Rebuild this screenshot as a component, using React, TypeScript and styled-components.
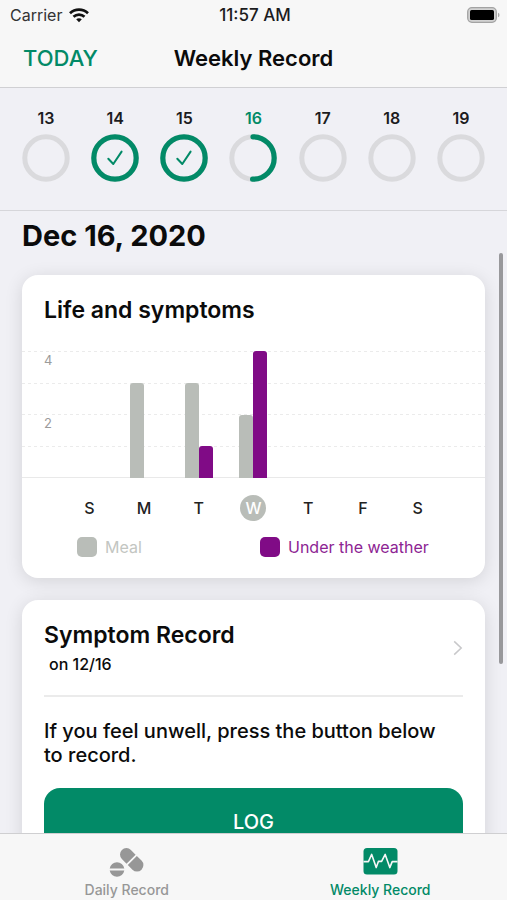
import React from "react";
import styled, { createGlobalStyle } from "styled-components";

const color = {
  green: "#028a67",
  purple: "#800b86",
  stone: "#b9bdb8",
  ring: "#dadadd",
  page: "#f0f0f5",
  bar: "#f7f7f7",
  muted: "#979797",
};

const GlobalStyle = createGlobalStyle`
  *, *::before, *::after { box-sizing: border-box; }
  body { margin: 0; background: ${color.page}; }
  h1, h2, p, ul { margin: 0; padding: 0; }
  ul { list-style: none; }
  button { font: inherit; border: 0; background: none; padding: 0; cursor: pointer; }
  a { color: inherit; text-decoration: none; }
`;

const Screen = styled.div`
  height: 100vh;
  display: flex;
  flex-direction: column;
  background: ${color.page};
  color: #0b0b0b;
  font-family: Inter, "Liberation Sans", sans-serif;
`;

const Header = styled.header`
  flex: none;
  background: ${color.bar};
  border-bottom: 1px solid #d0d0d3;
`;

const StatusBar = styled.div`
  display: grid;
  grid-template-columns: 1fr auto 1fr;
  align-items: center;
  height: 30px;
  padding: 0 7px 0 10px;
  font-size: 16px;
`;

const Carrier = styled.span`
  display: flex;
  align-items: center;
  gap: 7px;
  color: #333;
`;

const Clock = styled.time`
  font-size: 17px;
  font-weight: 500;
  color: #1c1c1e;
`;

const StatusIcons = styled.span`
  display: flex;
  justify-content: flex-end;
`;

const NavBar = styled.div`
  display: grid;
  grid-template-columns: 1fr auto 1fr;
  align-items: center;
  height: 57px;
  padding: 0 23px 2px;
`;

const TodayButton = styled.button`
  justify-self: start;
  color: ${color.green};
  && { font-size: 22px; font-weight: 500; }
`;

const NavTitle = styled.h1`
  font-size: 22px;
  font-weight: 600;
`;

const WeekStrip = styled.ul`
  flex: none;
  display: flex;
  justify-content: space-between;
  height: 123px;
  padding: 20px 22px 0;
  border-bottom: 1px solid #d6d6da;
`;

const DayButton = styled.button<{ $current?: boolean }>`
  display: flex;
  flex-direction: column;
  align-items: center;
  gap: 6px;
  width: 48px;
  color: ${(p) => (p.$current ? color.green : "#1c1c1e")};
  && { font-size: 16px; font-weight: 600; line-height: 20px; }
`;

const Content = styled.div`
  position: relative;
  flex: 1;
  min-height: 0;
`;

const Scroller = styled.main`
  height: 100%;
  overflow-y: auto;
  scrollbar-width: none;
  padding: 6px 22px 24px;
`;

const ScrollThumb = styled.div`
  position: absolute;
  top: 42px;
  right: 4px;
  width: 4px;
  height: 66%;
  border-radius: 2px;
  background: #98989b;
`;

const DateTitle = styled.h2`
  font-size: 29px;
  font-weight: 700;
  line-height: 38px;
  margin-bottom: 20px;
`;

const Card = styled.section`
  background: #fff;
  border-radius: 16px;
  box-shadow: 0 3px 18px rgba(0, 0, 0, 0.12);
  margin-bottom: 22px;
`;

const CardTitle = styled.h2`
  font-size: 23px;
  font-weight: 600;
  line-height: 28px;
`;

const ChartCard = styled(Card)`
  padding-bottom: 21px;
  & > ${CardTitle} { padding: 21px 22px 0; }
`;

const Plot = styled.div`
  display: grid;
  height: 127px;
  margin-top: 27px;
  & > * { grid-area: 1 / 1; }
`;

const GridLines = styled.div`
  display: grid;
  grid-template-rows: repeat(4, 1fr);
  border-bottom: 1px solid #e9e9e9;
`;

const GridRow = styled.span`
  padding: 2px 22px;
  font-size: 13px;
  line-height: 14px;
  color: #9b9b9b;
  background: repeating-linear-gradient(90deg, #ebebeb 0 3px, transparent 3px 6px) top / 100% 1px no-repeat;
`;

const Columns = styled.div`
  display: grid;
  grid-template-columns: repeat(7, 1fr);
  padding: 0 40px;
`;

const Column = styled.div`
  display: grid;
  grid-template-columns: 14px 14px;
  justify-content: center;
  align-items: end;
`;

const Bar = styled.div<{ $tone: string }>`
  background: ${(p) => p.$tone};
  border-radius: 3px 3px 0 0;
`;

const AxisLabels = styled(Columns)`
  margin-top: 17px;
  justify-items: center;
`;

const AxisLabel = styled.span<{ $active?: boolean }>`
  width: 26px;
  height: 26px;
  border-radius: 50%;
  text-align: center;
  font-size: 16px;
  line-height: 26px;
  font-weight: 500;
  color: ${(p) => (p.$active ? "#fff" : "#222")};
  background: ${(p) => (p.$active ? color.stone : "transparent")};
`;

const Legend = styled.ul`
  display: grid;
  grid-template-columns: 1fr 1fr;
  padding: 0 42px 0 55px;
  margin-top: 16px;
`;

const LegendItem = styled.li<{ $tone: string; $text: string }>`
  display: flex;
  align-items: center;
  gap: 8px;
  font-size: 16px;
  line-height: 20px;
  white-space: nowrap;
  color: ${(p) => p.$text};
  &::before {
    content: "";
    width: 20px;
    height: 20px;
    border-radius: 5px;
    background: ${(p) => p.$tone};
  }
`;

const RecordCard = styled(Card)`
  padding: 21px 22px 24px;
`;

const RecordLink = styled.a`
  display: flex;
  align-items: center;
  justify-content: space-between;
  padding-bottom: 21px;
  border-bottom: 2px solid #ebebeb;
`;

const RecordDate = styled.p`
  padding: 5px 0 0 5px;
  font-size: 16px;
  line-height: 20px;
  font-weight: 500;
`;

const Hint = styled.p`
  margin: 22px 0 21px;
  padding-right: 22px;
  font-size: 20px;
  line-height: 24px;
  font-weight: 500;
`;

const LogButton = styled.button`
  width: 100%;
  height: 68px;
  border-radius: 16px;
  color: #fff;
  && { background: ${color.green}; font-size: 20px; font-weight: 500; line-height: 20px; }
`;

const TabBar = styled.nav`
  flex: none;
  display: grid;
  grid-template-columns: 1fr 1fr;
  height: 67px;
  background: ${color.bar};
  border-top: 1px solid #cfcfd1;
`;

const Tab = styled.a<{ $active?: boolean }>`
  display: flex;
  flex-direction: column;
  align-items: center;
  gap: 4px;
  padding-top: 13px;
  font-size: 14px;
  line-height: 18px;
  font-weight: 500;
  color: ${(p) => (p.$active ? color.green : color.muted)};
`;

const WifiIcon = () => (
  <svg width="20" height="15" viewBox="0 0 20 15" fill="none" stroke="#111" strokeWidth="2.7" aria-hidden="true">
    <path d="M1 5.2C6 .4 14 .4 19 5.2" />
    <path d="M4.5 8.8C7.6 5.9 12.4 5.9 15.5 8.8" />
    <path d="M7.2 11.3C8.8 9.9 11.2 9.9 12.8 11.3L10 14.2Z" fill="#111" stroke="none" />
  </svg>
);

const BatteryIcon = () => (
  <svg width="33" height="16" viewBox="0 0 33 16" aria-hidden="true">
    <rect x=".7" y=".7" width="28.6" height="14.6" rx="4.2" fill="#d2d2d2" stroke="#a3a3a3" strokeWidth="1.3" />
    <rect x="3" y="3" width="24" height="10" rx="1.6" fill="#000" />
    <path d="M31 5.7q1.5.6 1.5 2.3T31 10.3z" fill="#aaa" />
  </svg>
);

const Ring = ({ progress }: { progress: number }) => {
  const length = 2 * Math.PI * 21.2;
  return (
    <svg width="48" height="48" viewBox="0 0 48 48" fill="none" aria-hidden="true">
      <circle cx="24" cy="24" r="21.2" stroke={color.ring} strokeWidth="5" />
      {progress > 0 && (
        <circle
          cx="24"
          cy="24"
          r="21.2"
          stroke={color.green}
          strokeWidth="5.2"
          strokeLinecap="round"
          strokeDasharray={progress < 1 ? `${length * progress} ${length}` : undefined}
          transform="rotate(-90 24 24)"
        />
      )}
      {progress === 1 && (
        <path d="M17.3 24.8 22.3 30 30.6 17.6" stroke={color.green} strokeWidth="2" strokeLinecap="round" strokeLinejoin="round" />
      )}
    </svg>
  );
};

const ChevronIcon = () => (
  <svg width="10" height="16" viewBox="0 0 10 16" fill="none" stroke="#c8c8ca" strokeWidth="1.5" aria-hidden="true">
    <path d="M1.2 1.4 8.2 8 1.2 14.6" />
  </svg>
);

const PillsIcon = () => (
  <svg width="35" height="30" viewBox="0 0 35 30" aria-hidden="true">
    <g transform="translate(0 .6) rotate(45 22.7 12.2)" fill={color.muted}>
      <path d="M21.8 5.8v12.8H15.2a6.4 6.4 0 0 1 0-12.8z" />
      <path d="M23.6 5.8v12.8H30.2a6.4 6.4 0 0 0 0-12.8z" />
    </g>
    <path d="M.7 21.5a7.4 7.4 0 0 1 14.6 0zM.7 23.5a7.4 7.4 0 0 0 14.6 0z" fill={color.muted} />
  </svg>
);

const PulseIcon = () => (
  <svg width="35" height="30" viewBox="0 0 35 30" aria-hidden="true">
    <rect x=".5" y="1" width="34" height="26.5" rx="3.5" fill={color.green} />
    <path
      d="M.5 14.6H5.4L8.7 7.4 13.2 20.6 15.4 14.4H18.6L22.2 7.4 26.8 20.6 29.2 14.6H34.5"
      fill="none"
      stroke="#f7f7f7"
      strokeWidth="1.6"
      strokeLinejoin="round"
    />
  </svg>
);

const days = [
  { date: 13, progress: 0 },
  { date: 14, progress: 1 },
  { date: 15, progress: 1 },
  { date: 16, progress: 0.5, current: true },
  { date: 17, progress: 0 },
  { date: 18, progress: 0 },
  { date: 19, progress: 0 },
];

const chart = [
  { label: "S", meal: 0, unwell: 0 },
  { label: "M", meal: 3, unwell: 0 },
  { label: "T", meal: 3, unwell: 1 },
  { label: "W", meal: 2, unwell: 4, active: true },
  { label: "T", meal: 0, unwell: 0 },
  { label: "F", meal: 0, unwell: 0 },
  { label: "S", meal: 0, unwell: 0 },
];

const chartMax = 4;
const barHeight = (value: number) => ({ height: `${(value / chartMax) * 100}%` });

export default function App() {
  return (
    <>
      <GlobalStyle />
      <Screen>
        <Header>
          <StatusBar>
            <Carrier>
              Carrier
              <WifiIcon />
            </Carrier>
            <Clock>11:57 AM</Clock>
            <StatusIcons>
              <BatteryIcon />
            </StatusIcons>
          </StatusBar>
          <NavBar>
            <TodayButton type="button">TODAY</TodayButton>
            <NavTitle>Weekly Record</NavTitle>
          </NavBar>
        </Header>

        <WeekStrip>
          {days.map((day) => (
            <li key={day.date}>
              <DayButton type="button" $current={day.current} aria-pressed={!!day.current}>
                {day.date}
                <Ring progress={day.progress} />
              </DayButton>
            </li>
          ))}
        </WeekStrip>

        <Content>
          <Scroller>
            <DateTitle>Dec 16, 2020</DateTitle>

            <ChartCard>
              <CardTitle>Life and symptoms</CardTitle>
              <Plot>
                <GridLines>
                  <GridRow>4</GridRow>
                  <GridRow />
                  <GridRow>2</GridRow>
                  <GridRow />
                </GridLines>
                <Columns>
                  {chart.map((entry, i) => (
                    <Column key={i}>
                      <Bar $tone={color.stone} style={barHeight(entry.meal)} />
                      <Bar $tone={color.purple} style={barHeight(entry.unwell)} />
                    </Column>
                  ))}
                </Columns>
              </Plot>
              <AxisLabels>
                {chart.map((entry, i) => (
                  <AxisLabel key={i} $active={entry.active}>
                    {entry.label}
                  </AxisLabel>
                ))}
              </AxisLabels>
              <Legend>
                <LegendItem $tone={color.stone} $text="#c3c6c2">Meal</LegendItem>
                <LegendItem $tone={color.purple} $text="#8d2493">Under the weather</LegendItem>
              </Legend>
            </ChartCard>

            <RecordCard>
              <RecordLink href="#symptoms">
                <div>
                  <CardTitle>Symptom Record</CardTitle>
                  <RecordDate>on 12/16</RecordDate>
                </div>
                <ChevronIcon />
              </RecordLink>
              <Hint>If you feel unwell, press the button below to record.</Hint>
              <LogButton type="button">LOG</LogButton>
            </RecordCard>
          </Scroller>
          <ScrollThumb aria-hidden="true" />
        </Content>

        <TabBar>
          <Tab href="#daily">
            <PillsIcon />
            Daily Record
          </Tab>
          <Tab href="#weekly" $active aria-current="page">
            <PulseIcon />
            Weekly Record
          </Tab>
        </TabBar>
      </Screen>
    </>
  );
}
